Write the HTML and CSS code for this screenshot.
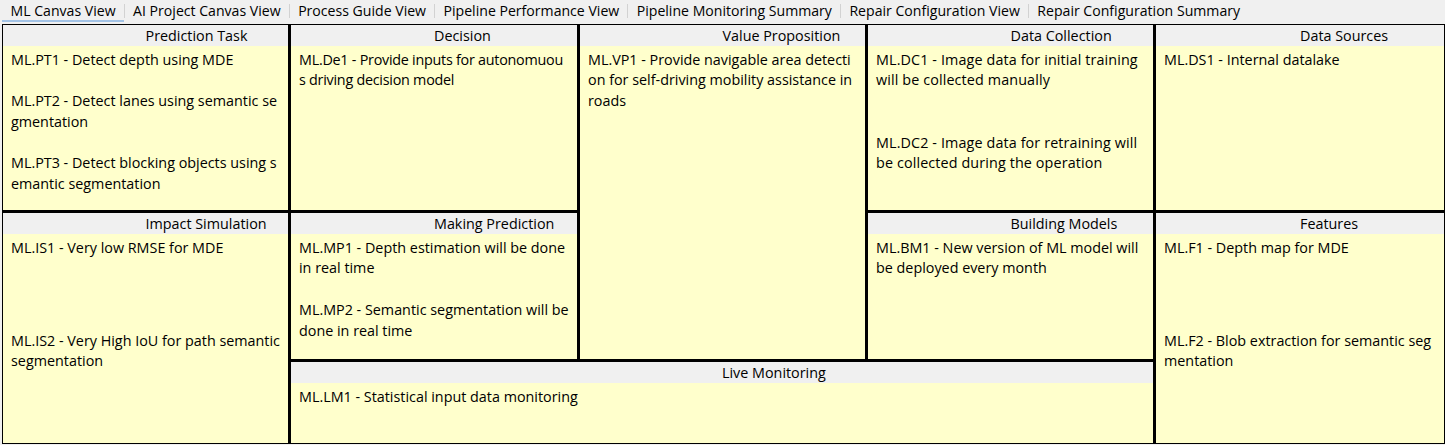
FILE: index.html
```html
<!DOCTYPE html>
<html lang="en">
<head>
<meta charset="utf-8">
<title>ML Canvas View</title>
<link rel="stylesheet" href="styles.css">
</head>
<body>
<nav class="tabs">
  <div class="tab tab--active">ML Canvas View</div>
  <span class="tab-sep"></span>
  <div class="tab">AI Project Canvas View</div>
  <span class="tab-sep"></span>
  <div class="tab">Process Guide View</div>
  <span class="tab-sep"></span>
  <div class="tab">Pipeline Performance View</div>
  <span class="tab-sep"></span>
  <div class="tab">Pipeline Monitoring Summary</div>
  <span class="tab-sep"></span>
  <div class="tab">Repair Configuration View</div>
  <span class="tab-sep"></span>
  <div class="tab">Repair Configuration Summary</div>
</nav>
<main class="canvas">
  <section class="cell cell--pt">
    <div class="cell__head">Prediction Task</div>
    <div class="cell__body">
      <p class="item">ML.PT1 - Detect depth using MDE</p>
      <p class="item">ML.PT2 - Detect lanes using semantic segmentation</p>
      <p class="item">ML.PT3 - Detect blocking objects using semantic segmentation</p>
    </div>
  </section>
  <section class="cell cell--de">
    <div class="cell__head">Decision</div>
    <div class="cell__body cell__body--tight">
      <p class="item">ML.De1 - Provide inputs for autonomuous driving decision model</p>
    </div>
  </section>
  <section class="cell cell--vp">
    <div class="cell__head">Value Proposition</div>
    <div class="cell__body">
      <p class="item">ML.VP1 - Provide navigable area detection for self-driving mobility assistance in roads</p>
    </div>
  </section>
  <section class="cell cell--dc">
    <div class="cell__head">Data Collection</div>
    <div class="cell__body cell__body--wide cell__body--spaced">
      <p class="item">ML.DC1 - Image data for initial training will be collected manually</p>
      <p class="item">ML.DC2 - Image data for retraining will be collected during the operation</p>
    </div>
  </section>
  <section class="cell cell--ds">
    <div class="cell__head">Data Sources</div>
    <div class="cell__body">
      <p class="item">ML.DS1 - Internal datalake</p>
    </div>
  </section>
  <section class="cell cell--is">
    <div class="cell__head">Impact Simulation</div>
    <div class="cell__body cell__body--loose">
      <p class="item">ML.IS1 - Very low RMSE for MDE</p>
      <p class="item">ML.IS2 - Very High IoU for path semantic segmentation</p>
    </div>
  </section>
  <section class="cell cell--mp">
    <div class="cell__head">Making Prediction</div>
    <div class="cell__body">
      <p class="item">ML.MP1 - Depth estimation will be done in real time</p>
      <p class="item">ML.MP2 - Semantic segmentation will be done in real time</p>
    </div>
  </section>
  <section class="cell cell--bm">
    <div class="cell__head">Building Models</div>
    <div class="cell__body">
      <p class="item">ML.BM1 - New version of ML model will be deployed every month</p>
    </div>
  </section>
  <section class="cell cell--f">
    <div class="cell__head">Features</div>
    <div class="cell__body cell__body--loose">
      <p class="item">ML.F1 - Depth map for MDE</p>
      <p class="item">ML.F2 - Blob extraction for semantic segmentation</p>
    </div>
  </section>
  <section class="cell cell--lm">
    <div class="cell__head">Live Monitoring</div>
    <div class="cell__body">
      <p class="item">ML.LM1 - Statistical input data monitoring</p>
    </div>
  </section>
</main>
</body>
</html>
```
FILE: styles.css
```css
html, body {
  margin: 0;
  padding: 0;
}

body {
  background: #f0f0f0;
  font-family: "Open Sans", "Noto Sans", sans-serif;
  font-size: 14.35px;
  color: #000;
  width: 1445px;
  height: 445px;
  overflow: hidden;
}

.tabs {
  display: flex;
  align-items: flex-start;
  height: 24px;
  padding-left: 2px;
  box-sizing: border-box;
  font-size: 14.1px;
}

.tab {
  height: 22px;
  line-height: 21px;
  padding: 0 8px 0 8.5px;
  box-sizing: border-box;
  border-bottom: 2px solid transparent;
  white-space: nowrap;
}

.tab--active {
  border-bottom-color: #a3c3e6;
}

.tab-sep {
  width: 1px;
  height: 14px;
  margin-top: 4px;
  background: #d2d2d2;
}

.canvas {
  display: grid;
  grid-template-columns: 285px 286px 285px 285px 1fr;
  grid-template-rows: 185px 146px 81px;
  grid-template-areas:
    "pt de vp dc ds"
    "is mp vp bm f"
    "is lm lm lm f";
  gap: 3px;
  width: 1443px;
  margin-left: 2px;
  box-sizing: border-box;
  border: 1px solid #000;
  background: #000;
}

.cell {
  display: flex;
  flex-direction: column;
  min-width: 0;
  min-height: 0;
  overflow: hidden;
  background: #ffffcc;
}

.cell--pt { grid-area: pt; }
.cell--de { grid-area: de; }
.cell--vp { grid-area: vp; }
.cell--dc { grid-area: dc; }
.cell--ds { grid-area: ds; }
.cell--is { grid-area: is; }
.cell--mp { grid-area: mp; }
.cell--bm { grid-area: bm; }
.cell--f  { grid-area: f; }
.cell--lm { grid-area: lm; }

.cell__head {
  flex: none;
  height: 21px;
  line-height: 21px;
  padding-left: 50%;
  background: #f0f0f0;
  white-space: nowrap;
}

.cell__body {
  display: flex;
  flex-direction: column;
  gap: 20.75px;
  padding: 3.5px 7.5px 0 8px;
  line-height: 20.75px;
  word-break: break-all;
}

.cell__body--tight {
  letter-spacing: -0.25px;
}

.cell__body--spaced {
  letter-spacing: 0.12px;
}

.cell__body--wide {
  gap: 41.5px;
}

.cell__body--loose {
  gap: 72.25px;
}

.item {
  margin: 0;
}
```
